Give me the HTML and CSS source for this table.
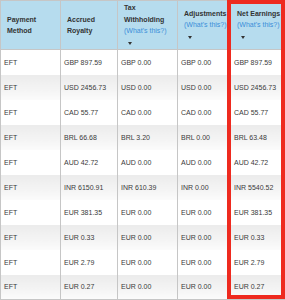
FILE: index.html
```html
<!DOCTYPE html>
<html>
<head>
<meta charset="utf-8">
<link rel="stylesheet" href="styles.css">
</head>
<body>
<div class="wrap">
<table class="earn">
  <colgroup>
    <col class="c1"><col class="c2"><col class="c3"><col class="c4"><col class="c5">
  </colgroup>
  <thead>
    <tr>
      <th>Payment<br>Method</th>
      <th>Accrued<br>Royalty</th>
      <th>Tax<br>Withholding<br><a class="help">(What's this?)</a><br><span class="arrow"><svg width="4" height="3" viewBox="0 0 4 3"><path d="M0 0H4L2 3Z" fill="#333"/></svg></span></th>
      <th>Adjustments<br><a class="help">(What's this?)</a><br><span class="arrow"><svg width="4" height="3" viewBox="0 0 4 3"><path d="M0 0H4L2 3Z" fill="#333"/></svg></span></th>
      <th>Net Earnings<br><a class="help">(What's this?)</a><br><span class="arrow"><svg width="4" height="3" viewBox="0 0 4 3"><path d="M0 0H4L2 3Z" fill="#333"/></svg></span></th>
    </tr>
  </thead>
  <tbody>
    <tr><td>EFT</td><td>GBP 897.59</td><td>GBP 0.00</td><td>GBP 0.00</td><td>GBP 897.59</td></tr>
    <tr><td>EFT</td><td>USD 2456.73</td><td>USD 0.00</td><td>USD 0.00</td><td>USD 2456.73</td></tr>
    <tr><td>EFT</td><td>CAD 55.77</td><td>CAD 0.00</td><td>CAD 0.00</td><td>CAD 55.77</td></tr>
    <tr><td>EFT</td><td>BRL 66.68</td><td>BRL 3.20</td><td>BRL 0.00</td><td>BRL 63.48</td></tr>
    <tr><td>EFT</td><td>AUD 42.72</td><td>AUD 0.00</td><td>AUD 0.00</td><td>AUD 42.72</td></tr>
    <tr><td>EFT</td><td>INR 6150.91</td><td>INR 610.39</td><td>INR 0.00</td><td>INR 5540.52</td></tr>
    <tr><td>EFT</td><td>EUR 381.35</td><td>EUR 0.00</td><td>EUR 0.00</td><td>EUR 381.35</td></tr>
    <tr><td>EFT</td><td>EUR 0.33</td><td>EUR 0.00</td><td>EUR 0.00</td><td>EUR 0.33</td></tr>
    <tr><td>EFT</td><td>EUR 2.79</td><td>EUR 0.00</td><td>EUR 0.00</td><td>EUR 2.79</td></tr>
    <tr><td>EFT</td><td>EUR 0.27</td><td>EUR 0.00</td><td>EUR 0.00</td><td>EUR 0.27</td></tr>
  </tbody>
</table>
<div class="highlight"></div>
</div>
</body>
</html>
```
FILE: styles.css
```css
html, body {
  margin: 0;
  padding: 0;
  background: #fff;
  overflow: hidden;
}
.wrap {
  position: relative;
  width: 285px;
  height: 300px;
  overflow: hidden;
}
.earn {
  border-collapse: collapse;
  table-layout: fixed;
  width: 320px;
  font-family: "Liberation Sans", Arial, sans-serif;
  font-size: 7px;
  color: #3a3a3a;
}
.c1 { width: 60px; }
.c2 { width: 57px; }
.c3 { width: 60px; }
.c4 { width: 53px; }
.c5 { width: 90px; }
.earn th {
  background: #b6dcee;
  color: #333;
  font-weight: bold;
  text-align: left;
  vertical-align: middle;
  line-height: 11.5px;
  height: 49px;
  padding: 0 3px 0 6px;
  border: 1px solid #c6c6c6;
  box-sizing: border-box;
  white-space: nowrap;
}
.help {
  color: #3b8fd9;
  font-weight: normal;
}
.arrow {
  display: inline-block;
  padding-left: 4px;
}
.arrow svg {
  display: block;
  margin-top: 4px;
}
.earn td {
  height: 25px;
  padding: 0 3px;
  border-left: 1px solid #c6c6c6;
  border-right: 1px solid #c6c6c6;
  vertical-align: middle;
  white-space: nowrap;
  box-sizing: border-box;
}
.earn tbody tr:nth-child(even) td {
  background: linear-gradient(#ebebeb, #f4f4f4 60%, #fbfbfb);
}
.earn tbody tr:last-child td {
  border-bottom: 1px solid #c6c6c6;
}
.highlight {
  position: absolute;
  left: 227px;
  top: 0;
  width: 58px;
  height: 299px;
  border: 4px solid #ee2a1f;
  box-sizing: border-box;
}
```
